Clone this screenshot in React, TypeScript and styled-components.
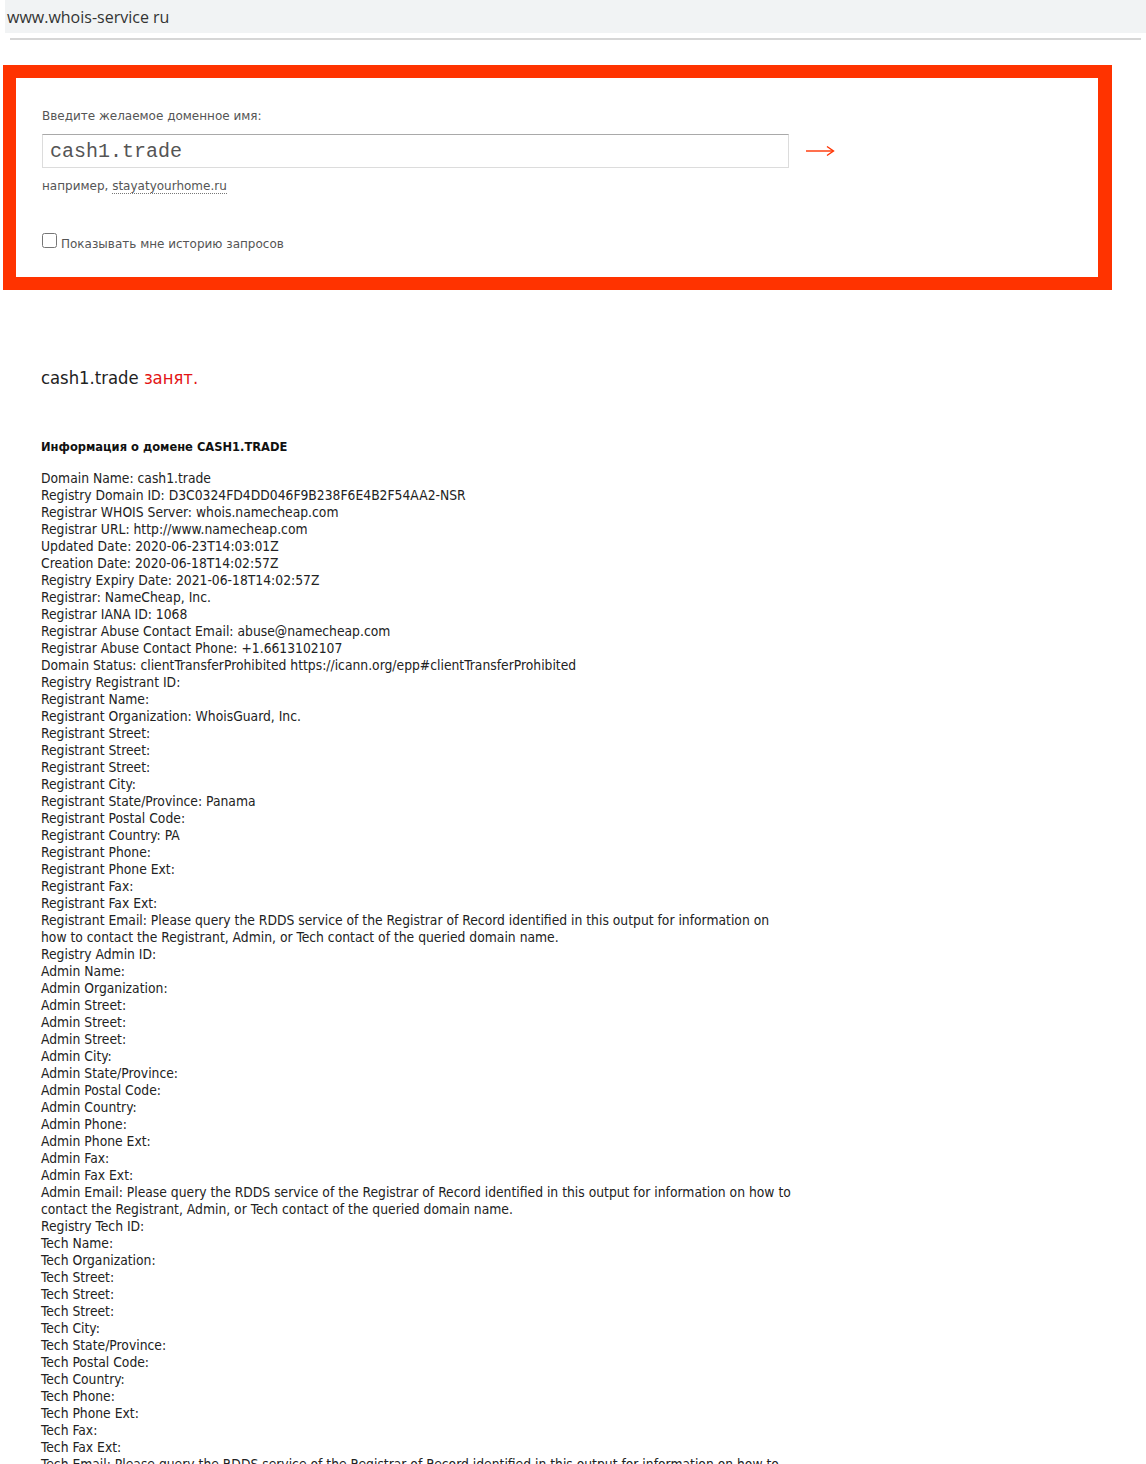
import styled, { createGlobalStyle } from 'styled-components'

const GlobalStyle = createGlobalStyle`
  html, body {
    margin: 0;
    padding: 0;
    background: #fff;
  }
`

const Page = styled.div`
  font-family: "DejaVu Sans Condensed", "DejaVu Sans", sans-serif;
  color: #222;
  padding-bottom: 40px;
`

const AddressBar = styled.div`
  margin-left: 5px;
  height: 33px;
  background: #f1f3f4;
  display: flex;
  align-items: center;
  padding-left: 2px;
  font-family: "Open Sans", "Noto Sans", sans-serif;
  font-size: 16px;
  color: #333;
  border-bottom: 5px solid #fff;
  box-shadow: 0 7px 0 -5px #d6d6d6;
`

const SearchBox = styled.form`
  margin: 27px 0 0 3px;
  width: 1109px;
  box-sizing: border-box;
  border: 13px solid #ff3300;
  border-right-width: 14px;
  padding: 31px 26px 26px;
  font-family: "DejaVu Sans", Verdana, sans-serif;
  font-size: 12px;
  color: #555;
`

const Label = styled.div`
  line-height: 14px;
`

const InputRow = styled.div`
  display: flex;
  align-items: center;
  margin-top: 11px;
`

const DomainInput = styled.input`
  width: 747px;
  height: 34px;
  box-sizing: border-box;
  border: 1px solid #dcdcdc;
  border-top-color: #a9a9a9;
  padding: 0 7px;
  font-family: "Liberation Mono", "Courier New", monospace;
  font-size: 20px;
  color: #555;
  outline: none;
`

const Submit = styled.button`
  display: flex;
  background: none;
  border: 0;
  margin-left: 16px;
  padding: 0;
  cursor: pointer;
`

const Hint = styled.div`
  margin-top: 11px;
  line-height: 14px;
`

const Example = styled.a`
  color: #555;
  text-decoration: none;
  border-bottom: 1px dotted #777;
`

const HistoryRow = styled.label`
  display: flex;
  align-items: flex-start;
  margin-top: 40px;
  line-height: 14px;
`

const Check = styled.input`
  width: 15px;
  height: 15px;
  margin: 0 4px 0 0;
`

const Caption = styled.span`
  padding-top: 4px;
`

const Result = styled.div`
  padding: 0 41px;
`

const Status = styled.div`
  margin-top: 77px;
  font-size: 18.3px;
  line-height: 22px;
  color: #222;
`

const Busy = styled.span`
  color: #e31515;
`

const InfoTitle = styled.div`
  margin-top: 49px;
  font-weight: bold;
  font-size: 12.75px;
  line-height: 18px;
  color: #111;
`

const Whois = styled.div`
  margin-top: 14px;
  font-size: 13.75px;
  line-height: 17px;
  color: #222;
`

const Line = styled.div`
  white-space: pre;
`

const lines = [
  'Domain Name: cash1.trade',
  'Registry Domain ID: D3C0324FD4DD046F9B238F6E4B2F54AA2-NSR',
  'Registrar WHOIS Server: whois.namecheap.com',
  'Registrar URL: http://www.namecheap.com',
  'Updated Date: 2020-06-23T14:03:01Z',
  'Creation Date: 2020-06-18T14:02:57Z',
  'Registry Expiry Date: 2021-06-18T14:02:57Z',
  'Registrar: NameCheap, Inc.',
  'Registrar IANA ID: 1068',
  'Registrar Abuse Contact Email: abuse@namecheap.com',
  'Registrar Abuse Contact Phone: +1.6613102107',
  'Domain Status: clientTransferProhibited https://icann.org/epp#clientTransferProhibited',
  'Registry Registrant ID:',
  'Registrant Name:',
  'Registrant Organization: WhoisGuard, Inc.',
  'Registrant Street:',
  'Registrant Street:',
  'Registrant Street:',
  'Registrant City:',
  'Registrant State/Province: Panama',
  'Registrant Postal Code:',
  'Registrant Country: PA',
  'Registrant Phone:',
  'Registrant Phone Ext:',
  'Registrant Fax:',
  'Registrant Fax Ext:',
  'Registrant Email: Please query the RDDS service of the Registrar of Record identified in this output for information on',
  'how to contact the Registrant, Admin, or Tech contact of the queried domain name.',
  'Registry Admin ID:',
  'Admin Name:',
  'Admin Organization:',
  'Admin Street:',
  'Admin Street:',
  'Admin Street:',
  'Admin City:',
  'Admin State/Province:',
  'Admin Postal Code:',
  'Admin Country:',
  'Admin Phone:',
  'Admin Phone Ext:',
  'Admin Fax:',
  'Admin Fax Ext:',
  'Admin Email: Please query the RDDS service of the Registrar of Record identified in this output for information on how to',
  'contact the Registrant, Admin, or Tech contact of the queried domain name.',
  'Registry Tech ID:',
  'Tech Name:',
  'Tech Organization:',
  'Tech Street:',
  'Tech Street:',
  'Tech Street:',
  'Tech City:',
  'Tech State/Province:',
  'Tech Postal Code:',
  'Tech Country:',
  'Tech Phone:',
  'Tech Phone Ext:',
  'Tech Fax:',
  'Tech Fax Ext:',
  'Tech Email: Please query the RDDS service of the Registrar of Record identified in this output for information on how to',
  'contact the Registrant, Admin, or Tech contact of the queried domain name.',
  'Name Server: dns1.registrar-servers.com',
  'Name Server: dns2.registrar-servers.com',
  'DNSSEC: unsigned',
]

export default function App() {
  return (
    <>
      <GlobalStyle />
      <Page>
        <AddressBar>www.whois-service ru</AddressBar>
        <SearchBox onSubmit={(e) => e.preventDefault()}>
          <Label>Введите желаемое доменное имя:</Label>
          <InputRow>
            <DomainInput defaultValue="cash1.trade" />
            <Submit type="submit" aria-label="Проверить">
              <svg width="30" height="12" viewBox="0 0 30 12">
                <path d="M1 6H28" stroke="#ff3300" strokeWidth="1.4" />
                <path d="M22 1.5L28.5 6L22 10.5" fill="none" stroke="#ff3300" strokeWidth="1.4" />
              </svg>
            </Submit>
          </InputRow>
          <Hint>
            например, <Example href="#">stayatyourhome.ru</Example>
          </Hint>
          <HistoryRow>
            <Check type="checkbox" />
            <Caption>Показывать мне историю запросов</Caption>
          </HistoryRow>
        </SearchBox>
        <Result>
          <Status>
            cash1.trade <Busy>занят.</Busy>
          </Status>
          <InfoTitle>Информация о домене CASH1.TRADE</InfoTitle>
          <Whois>
            {lines.map((text, i) => (
              <Line key={i}>{text}</Line>
            ))}
          </Whois>
        </Result>
      </Page>
    </>
  )
}
